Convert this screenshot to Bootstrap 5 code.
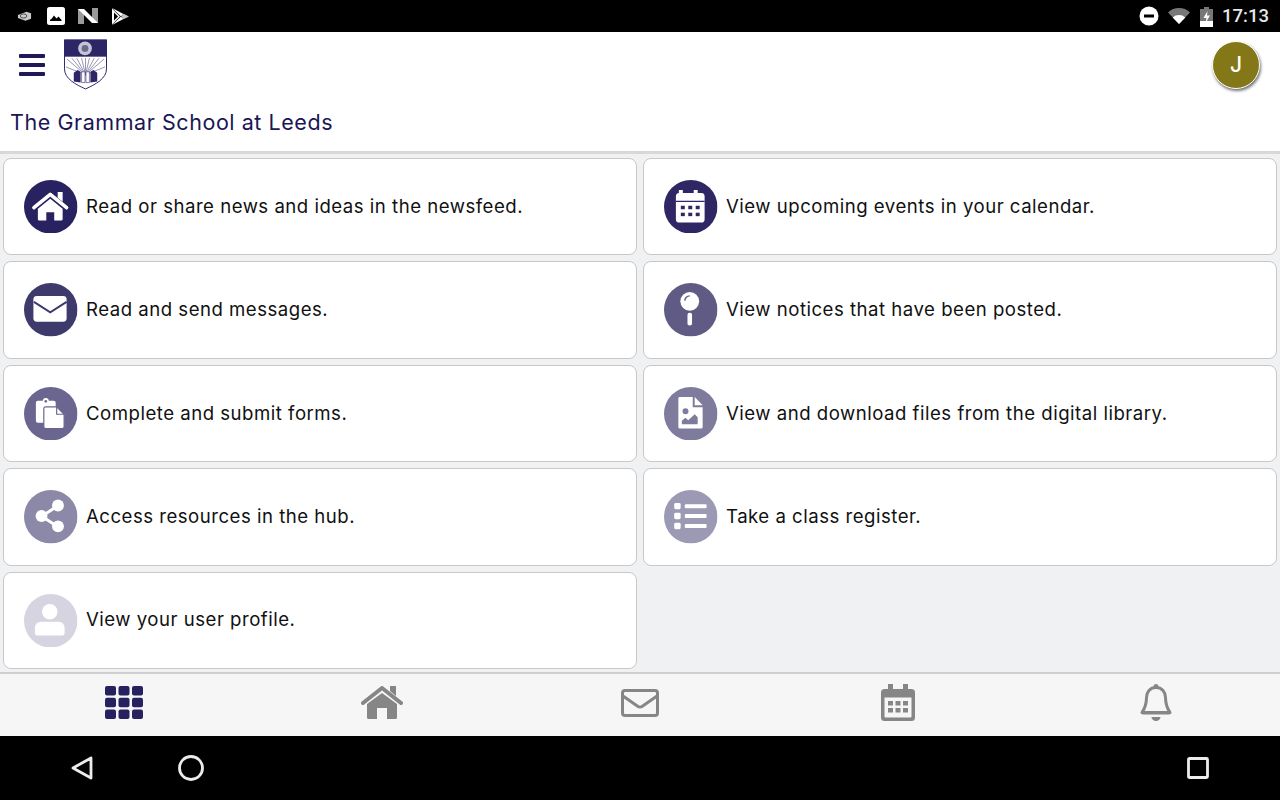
<!DOCTYPE html>
<html lang="en">
<head>
<meta charset="utf-8">
<title>The Grammar School at Leeds</title>
<link rel="stylesheet" href="https://cdn.jsdelivr.net/npm/bootstrap@5.3.0/dist/css/bootstrap.min.css">
<style>
html,body{height:800px;overflow:hidden;margin:0}
body{font-family:"Inter","Liberation Sans",sans-serif;background:#f0f1f3}
.shell{height:800px}
.statusbar{height:32px;background:#000;padding:0 11px 0 17px}
.statusleft{gap:14px}
.statusright{gap:9px}
.picshift{margin:0 -1px 0 1px}
.battshift{margin-left:1px}
.clock{font-family:Roboto,sans-serif;font-weight:500;font-size:18.500px;color:#e8e8e8;line-height:32px}
.apphead{height:122px;background:#fff;border-bottom:3px solid #d8d8d8;padding:0 18px 0 11px;position:relative}
.toprow{height:58px;padding-top:7px}
.burger{width:26px;margin-left:8px;margin-right:19px;margin-top:15px;color:#1f1a57}
.avatar{position:absolute;right:20px;top:9px;width:48px;height:48px;border-radius:50%;background:#847718;color:#fff;font-size:21px;font-weight:500;border:1px solid #fff;box-shadow:1px 2px 3px rgba(0,0,0,.55)}
.schoolname{font-size:21.500px;line-height:26px;color:#1a1655;letter-spacing:.56px;margin-top:19px;margin-left:-1px;font-weight:400}
.tilegrid{flex:1 1 0;display:grid;grid-template-columns:634px 634px;grid-template-rows:repeat(5,1fr);column-gap:6px;row-gap:6px;padding:4px 3px 3px;min-height:0}
.tile{border:1px solid #c8c8c8;border-radius:8px;background:#fff;padding-left:20px;gap:8.500px}
.tiletext{font-size:18.600px;color:#111;letter-spacing:.5px;white-space:nowrap}
.disc{width:53.500px;height:53.500px;flex:none;display:block}
.tone1{color:#292260}.tone2{color:#2e2764}.tone3{color:#3e3a6c}.tone4{color:#5f5b85}.tone5{color:#6b6690}.tone6{color:#7f7b9d}.tone7{color:#8c88a8}.tone8{color:#9c99b5}.tone9{color:#d5d4e0}
.bottombar{height:64px;background:#f6f6f6;border-top:2px solid #cfcfcf;padding:0 94px}
.slot{width:60px;height:57px}
.greyicon{color:#868686}
.navyicon{color:#28215f}
.navbarblack{height:64px;background:#000;color:#ececec;position:relative}
.softkeys{padding:0 71px 0 71px;height:64px}
.keyleft{gap:85px}
</style>
</head>
<body>
<svg width="0" height="0" class="position-absolute">
<defs>
<symbol id="i-home" viewBox="0 0 54 54">
<circle cx="27" cy="27" r="27" fill="currentColor"/>
<path d="M34 12h5v10l-5-4z" fill="#fff"/>
<path d="M10 28L26.5 14.5L43 28" fill="none" stroke="#fff" stroke-width="3.6" stroke-linecap="round" stroke-linejoin="round"/>
<path d="M14 29L26.5 19L39 29V39.5a1.5 1.5 0 0 1-1.5 1.5H30.500V32.500H22.500V41H15.500a1.500 1.500 0 0 1-1.500-1.500z" fill="#fff"/>
</symbol>
<symbol id="i-mail" viewBox="0 0 54 54">
<circle cx="27" cy="27" r="27" fill="currentColor"/>
<rect x="9.500" y="13" width="33.500" height="26" rx="3.500" fill="#fff"/>
<path d="M10 19L26.500 29.500L43 19" fill="none" stroke="currentColor" stroke-width="2"/>
</symbol>
<symbol id="i-cal" viewBox="0 0 54 54">
<circle cx="27" cy="27" r="27" fill="currentColor"/>
<path d="M15 10h4v3h11v-3h4v0h0v3h3.500a3.500 3.500 0 0 1 3.500 3.500v23a3.500 3.500 0 0 1-3.500 3.500h-22a3.500 3.500 0 0 1-3.500-3.500v-23a3.500 3.500 0 0 1 3.500-3.500H15z" fill="#fff"/>
<path d="M12 21.500h29" stroke="currentColor" stroke-width="1.300"/>
<g fill="currentColor"><rect x="17" y="26" width="4" height="3.500"/><rect x="24.500" y="26" width="4" height="3.500"/><rect x="32" y="26" width="4" height="3.500"/><rect x="17" y="33" width="4" height="3.500"/><rect x="24.500" y="33" width="4" height="3.500"/><rect x="32" y="33" width="4" height="3.500"/></g>
</symbol>
<symbol id="i-pin" viewBox="0 0 54 54">
<circle cx="27" cy="27" r="27" fill="currentColor"/>
<circle cx="26" cy="18.500" r="9.500" fill="#fff"/>
<path d="M21 18a5 5 0 0 1 5-5" fill="none" stroke="currentColor" stroke-width="1.400"/>
<rect x="23.700" y="30" width="4.600" height="13" rx="2" fill="#fff"/>
</symbol>
<symbol id="i-forms" viewBox="0 0 54 54">
<circle cx="27" cy="27" r="27" fill="currentColor"/>
<path d="M14 14h5a3 3 0 0 1 6 0h5a2 2 0 0 1 2 2v18a2 2 0 0 1-2 2H14a2 2 0 0 1-2-2V16a2 2 0 0 1 2-2z" fill="#fff"/>
<circle cx="22" cy="14.500" r="1.300" fill="currentColor"/>
<path d="M22 20h11l7.500 7.500V40a2 2 0 0 1-2 2H22a2 2 0 0 1-2-2V22a2 2 0 0 1 2-2z" fill="#fff" stroke="currentColor" stroke-width="1.200"/>
<path d="M33 20v7.500h7.500" fill="none" stroke="currentColor" stroke-width="1.200"/>
</symbol>
<symbol id="i-file" viewBox="0 0 54 54">
<circle cx="27" cy="27" r="27" fill="currentColor"/>
<path d="M16 10h13v10.500h10V40.500a1.500 1.500 0 0 1-1.500 1.500H16a1.500 1.500 0 0 1-1.500-1.500V11.500A1.500 1.500 0 0 1 16 10z" fill="#fff"/>
<path d="M31 10l8 8.500h-8z" fill="#fff"/>
<circle cx="21.700" cy="24.500" r="3" fill="currentColor"/>
<path d="M18 37.500v-3.500l3.500-3 3 2.500 6.500-6 3 3v7z" fill="currentColor"/>
</symbol>
<symbol id="i-share" viewBox="0 0 54 54">
<circle cx="27" cy="27" r="27" fill="currentColor"/>
<path d="M34 16L18 26.500L34 37" fill="none" stroke="#fff" stroke-width="3"/>
<circle cx="34.300" cy="15.700" r="6" fill="#fff"/><circle cx="17.700" cy="26.300" r="6" fill="#fff"/><circle cx="34.300" cy="36.700" r="6" fill="#fff"/>
</symbol>
<symbol id="i-list" viewBox="0 0 54 54">
<circle cx="27" cy="27" r="27" fill="currentColor"/>
<g fill="#fff"><rect x="10.300" y="13" width="6.500" height="6.500" rx="1.500"/><rect x="10.300" y="23" width="6.500" height="6.500" rx="1.500"/><rect x="10.300" y="33" width="6.500" height="6.500" rx="1.500"/><rect x="21" y="14.300" width="22" height="4" rx="1"/><rect x="21" y="24.300" width="22" height="4" rx="1"/><rect x="21" y="34.300" width="22" height="4" rx="1"/></g>
</symbol>
<symbol id="i-user" viewBox="0 0 54 54">
<circle cx="27" cy="27" r="27" fill="currentColor"/>
<circle cx="26" cy="18" r="7.800" fill="#fff"/>
<path d="M17 28h18a6 6 0 0 1 6 6v5a3 3 0 0 1-3 3H14a3 3 0 0 1-3-3v-5a6 6 0 0 1 6-6z" fill="#fff"/>
</symbol>
</defs>
</svg>

<div class="shell d-flex flex-column">
  <div class="statusbar d-flex align-items-center justify-content-between">
    <div class="statusleft d-flex align-items-center">
      <svg width="15" height="12" viewBox="0 0 16 12"><path d="M1 5l9-3.500 5 1.500v6l-6 2-8-3z" fill="#c9c9c9"/><ellipse cx="7" cy="6" rx="3.500" ry="2.200" fill="none" stroke="#444" stroke-width="1"/></svg>
      <svg class="picshift" width="18" height="18" viewBox="0 0 18 18"><rect width="18" height="18" rx="2.500" fill="#fff"/><path d="M3 14v-1.500h1l3-4 2.500 3 2-2 3 3.500v1z" fill="#000"/></svg>
      <svg width="20" height="16" viewBox="0 0 20 16"><path d="M0 1h6v15H0z" fill="#9a9a9a"/><path d="M14 0h6v15h-6z" fill="#9a9a9a"/><path d="M0 1h6l14 14h-6z" fill="#fff"/></svg>
      <svg width="17" height="17" viewBox="0 0 17 17"><path d="M0 0l11.500 6-2.500 2.500z" fill="#fff"/><path d="M0 17l11.500-6-2.500-2.500z" fill="#fff"/><path d="M0 0.500l8 8-8 8z" fill="#fff"/><path d="M2 4.500l4 4-4 4z" fill="#000"/><path d="M11.500 5.800l5.500 2.700-5.500 2.700-2-2.700z" fill="#c4c4c4"/></svg>
    </div>
    <div class="statusright d-flex align-items-center">
      <svg width="20" height="20" viewBox="0 0 20 20"><circle cx="10" cy="10" r="9.500" fill="#fff"/><rect x="5" y="8.500" width="10" height="3" fill="#000"/></svg>
      <svg width="22" height="16" viewBox="0 0 22 16"><path d="M0 4.500a16 16 0 0 1 22 0L11 16z" fill="#777"/><path d="M4.700 9.500a9.500 9.500 0 0 1 12.600 0L11 16z" fill="#fff"/></svg>
      <svg class="battshift" width="13" height="21" viewBox="0 0 13 21"><path d="M4 1h5v2h4v18H0V3h4z" fill="#777"/><path d="M0 15h13v6H0z" fill="#fff"/><path d="M7.500 5L3.500 12h3l-1 5 4.500-7.500H7z" fill="#fff"/></svg>
      <span class="clock">17:13</span>
    </div>
  </div>

  <header class="apphead">
    <div class="toprow d-flex align-items-start">
      <svg class="burger" height="23" viewBox="0 0 26 23"><rect y="0" width="26" height="4" rx="1" fill="currentColor"/><rect y="9" width="26" height="4" rx="1" fill="currentColor"/><rect y="18" width="26" height="4" rx="1" fill="currentColor"/></svg>
      <svg width="43" height="51" viewBox="0 0 44 51">
        <path d="M0.500 0.500H43.500V30C43.500 40 32 46 22 50.500C12 46 0.500 40 0.500 30Z" fill="#fff" stroke="#2c2666" stroke-width="1"/>
        <rect x="0" y="0" width="44" height="17.500" fill="#2c2666"/>
        <circle cx="21.500" cy="9" r="7" fill="#c4c4d4"/><circle cx="21.500" cy="9" r="3.500" fill="#6c6890"/>
        <g stroke="#8b88a8" stroke-width=".9"><path d="M22 36L3 20"/><path d="M22 36L8 19"/><path d="M22 36L13 19"/><path d="M22 36L18 19"/><path d="M22 36L22 19"/><path d="M22 36L26 19"/><path d="M22 36L31 19"/><path d="M22 36L36 19"/><path d="M22 36L41 20"/><path d="M22 36L2 28"/><path d="M22 36L42 28"/></g>
        <path d="M10 34l4-3 3 2v11l-7-1z" fill="#2c2666"/><path d="M34 34l-4-3-3 2v11l7-1z" fill="#2c2666"/>
        <path d="M18 33h3.500v11H18zM22.500 33H26v11h-3.500z" fill="#fff" stroke="#2c2666" stroke-width=".6"/>
      </svg>
    </div>
    <div class="avatar d-flex align-items-center justify-content-center">J</div>
    <div class="schoolname">The Grammar School at Leeds</div>
  </header>

  <main class="tilegrid">
    <a class="tile d-flex align-items-center text-decoration-none"><svg class="disc tone1"><use href="#i-home"/></svg><span class="tiletext">Read or share news and ideas in the newsfeed.</span></a>
    <a class="tile d-flex align-items-center text-decoration-none"><svg class="disc tone2"><use href="#i-cal"/></svg><span class="tiletext">View upcoming events in your calendar.</span></a>
    <a class="tile d-flex align-items-center text-decoration-none"><svg class="disc tone3"><use href="#i-mail"/></svg><span class="tiletext">Read and send messages.</span></a>
    <a class="tile d-flex align-items-center text-decoration-none"><svg class="disc tone4"><use href="#i-pin"/></svg><span class="tiletext">View notices that have been posted.</span></a>
    <a class="tile d-flex align-items-center text-decoration-none"><svg class="disc tone5"><use href="#i-forms"/></svg><span class="tiletext">Complete and submit forms.</span></a>
    <a class="tile d-flex align-items-center text-decoration-none"><svg class="disc tone6"><use href="#i-file"/></svg><span class="tiletext">View and download files from the digital library.</span></a>
    <a class="tile d-flex align-items-center text-decoration-none"><svg class="disc tone7"><use href="#i-share"/></svg><span class="tiletext">Access resources in the hub.</span></a>
    <a class="tile d-flex align-items-center text-decoration-none"><svg class="disc tone8"><use href="#i-list"/></svg><span class="tiletext">Take a class register.</span></a>
    <a class="tile d-flex align-items-center text-decoration-none"><svg class="disc tone9"><use href="#i-user"/></svg><span class="tiletext">View your user profile.</span></a>
  </main>

  <nav class="bottombar d-flex justify-content-between">
    <div class="slot d-flex align-items-center justify-content-center navyicon">
      <svg width="38" height="33" viewBox="0 0 38 33" fill="currentColor"><rect width="11" height="9.500" rx="2"/><rect x="13.500" width="11" height="9.500" rx="2"/><rect x="27" width="11" height="9.500" rx="2"/><rect y="11.750" width="11" height="9.500" rx="2"/><rect x="13.500" y="11.750" width="11" height="9.500" rx="2"/><rect x="27" y="11.750" width="11" height="9.500" rx="2"/><rect y="23.500" width="11" height="9.500" rx="2"/><rect x="13.500" y="23.500" width="11" height="9.500" rx="2"/><rect x="27" y="23.500" width="11" height="9.500" rx="2"/></svg>
    </div>
    <div class="slot d-flex align-items-center justify-content-center greyicon">
      <svg width="42" height="33" viewBox="0 0 42 33" fill="currentColor"><path d="M29 0h6v10l-6-5z"/><path d="M2 17L21 2L40 17" fill="none" stroke="currentColor" stroke-width="4" stroke-linecap="round" stroke-linejoin="round"/><path d="M6 18L21 7L36 18V31.500a1.500 1.500 0 0 1-1.500 1.500H26V22H16V33H7.500A1.500 1.500 0 0 1 6 31.500z"/></svg>
    </div>
    <div class="slot d-flex align-items-center justify-content-center greyicon">
      <svg width="38" height="28" viewBox="0 0 38 28" fill="none" stroke="currentColor" stroke-width="3"><rect x="1.500" y="1.500" width="35" height="25" rx="2.500"/><path d="M2 7L17 17.500q2 1.200 4 0L36 7"/></svg>
    </div>
    <div class="slot d-flex align-items-center justify-content-center greyicon">
      <svg width="34" height="37" viewBox="0 0 34 37" fill="currentColor"><path d="M7 0h5v5h10V0h5v5h3.500A3.500 3.500 0 0 1 34 8.500v25a3.500 3.500 0 0 1-3.500 3.500h-27A3.500 3.500 0 0 1 0 33.500v-25A3.500 3.500 0 0 1 3.500 5H7zM3.500 13.500v19a1 1 0 0 0 1 1h25a1 1 0 0 0 1-1v-19z" fill-rule="evenodd"/><rect x="7" y="17" width="5" height="4.500"/><rect x="14.500" y="17" width="5" height="4.500"/><rect x="22" y="17" width="5" height="4.500"/><rect x="7" y="24" width="5" height="4.500"/><rect x="14.500" y="24" width="5" height="4.500"/><rect x="22" y="24" width="5" height="4.500"/></svg>
    </div>
    <div class="slot d-flex align-items-center justify-content-center greyicon">
      <svg width="32" height="37" viewBox="0 0 32 37"><path d="M16 3.500C10 3.500 6.500 8 6.500 13.500C6.500 21 5 24 2 28.500H30C27 24 25.500 21 25.500 13.500C25.500 8 22 3.500 16 3.500Z" fill="none" stroke="currentColor" stroke-width="3" stroke-linejoin="round"/><circle cx="16" cy="2.500" r="2.500" fill="currentColor"/><path d="M1 27h30v1.500a2 2 0 0 1-2 2H3a2 2 0 0 1-2-2z" fill="currentColor"/><path d="M11.500 33h9a4.500 4 0 0 1-9 0z" fill="currentColor"/></svg>
    </div>
  </nav>

  <div class="navbarblack">
    <div class="softkeys d-flex align-items-center justify-content-between">
      <div class="keyleft d-flex align-items-center">
        <svg width="22" height="24" viewBox="0 0 22 24" fill="none" stroke="currentColor" stroke-width="2.800" stroke-linejoin="round"><path d="M20 2L2 12L20 22z"/></svg>
        <svg width="26" height="26" viewBox="0 0 26 26" fill="none" stroke="currentColor" stroke-width="2.800"><circle cx="13" cy="13" r="11.500"/></svg>
      </div>
      <svg width="22" height="22" viewBox="0 0 22 22" fill="none" stroke="currentColor" stroke-width="2.800" stroke-linejoin="round"><rect x="1.500" y="1.500" width="19" height="19" rx="1"/></svg>
    </div>
  </div>
</div>
</body>
</html>
